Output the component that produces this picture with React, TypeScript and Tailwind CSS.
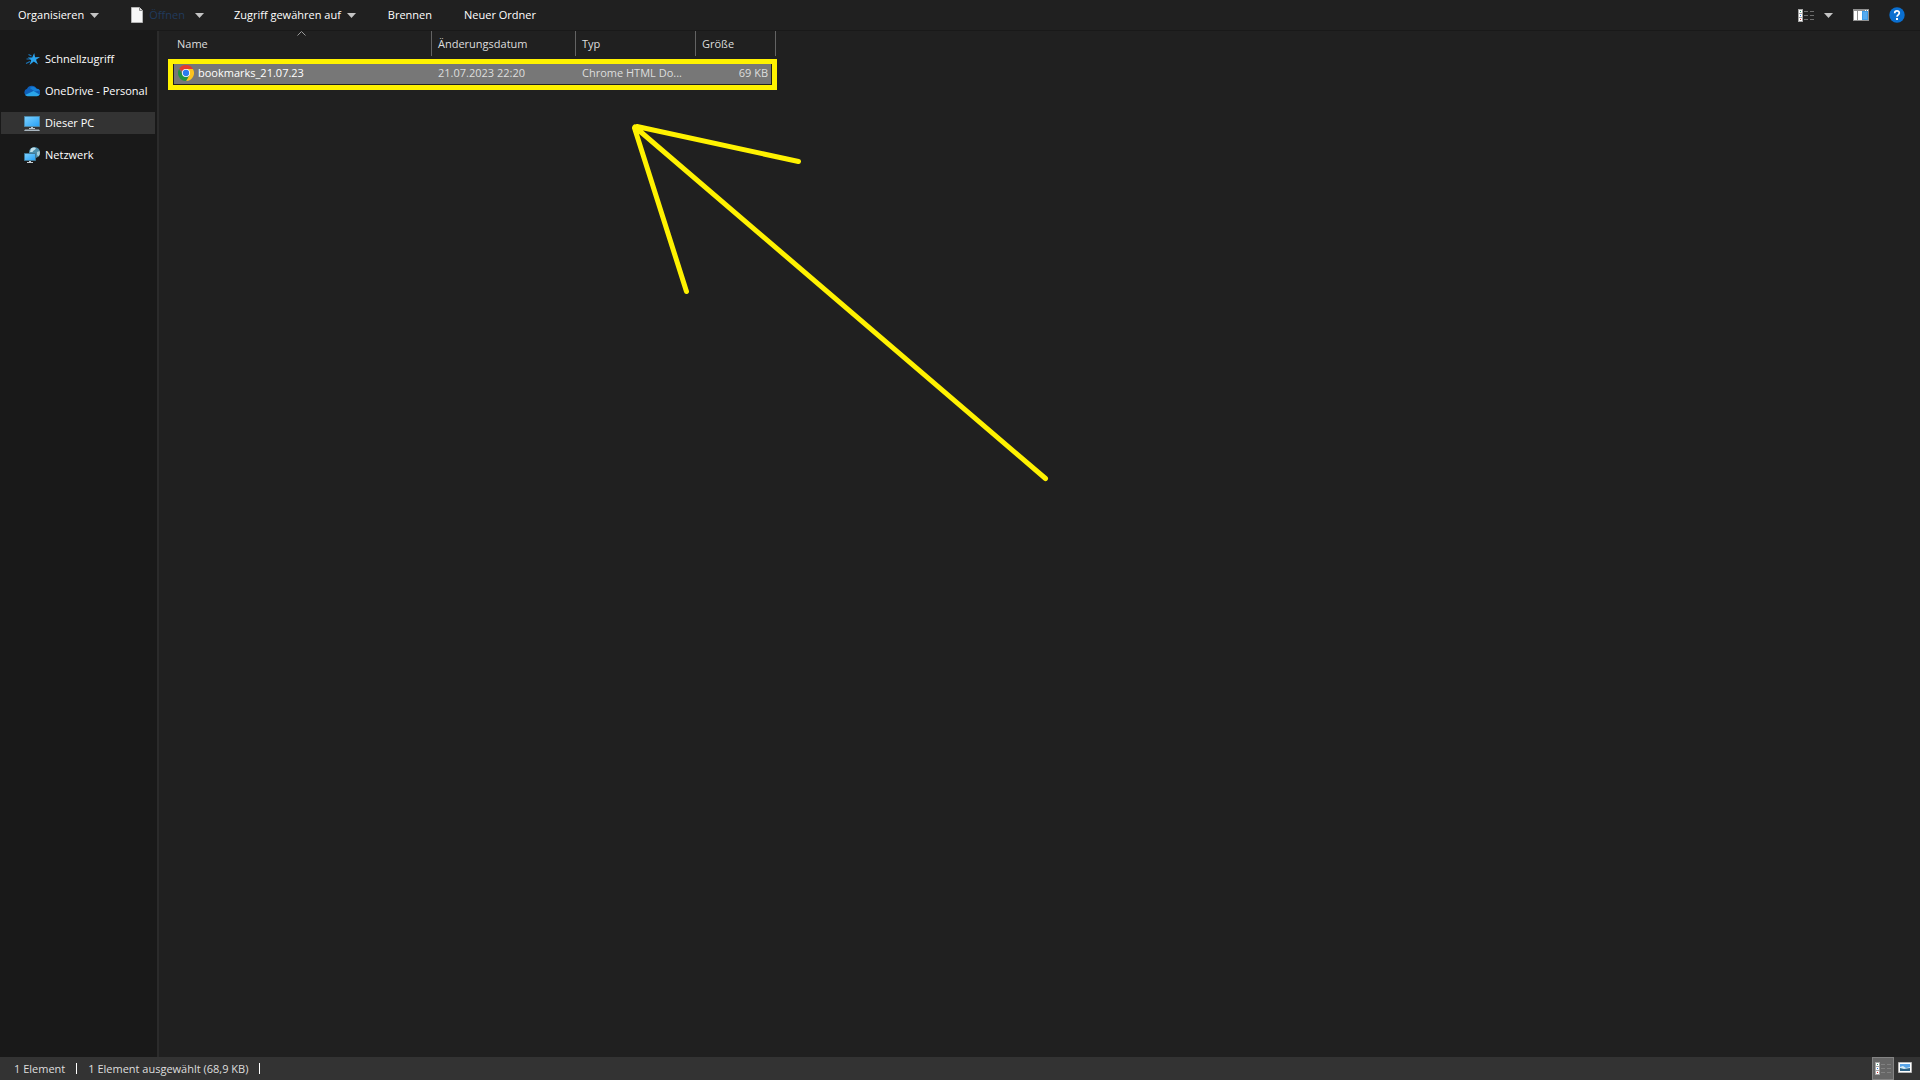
import type { ReactNode } from "react"

const places = [
  { id: 1, name: "Schnellzugriff", icon: <StarIcon /> },
  { id: 2, name: "OneDrive - Personal", icon: <CloudIcon /> },
  { id: 3, name: "Dieser PC", icon: <ComputerIcon />, active: true },
  { id: 4, name: "Netzwerk", icon: <NetworkIcon /> },
]

const files = [
  { id: 1, name: "bookmarks_21.07.23", date: "21.07.2023 22:20", type: "Chrome HTML Do...", size: "69 KB" },
]

function Caret() {
  return (
    <svg className="shrink-0" width="9" height="5" viewBox="0 0 9 5" aria-hidden="true">
      <path d="M0 0h9L4.5 5z" fill="#c4c4c4" />
    </svg>
  )
}

function PageIcon() {
  return (
    <svg width="12" height="16" viewBox="0 0 12 16" aria-hidden="true">
      <path d="M.5.5h8l3 3v12H.5z" fill="#f7f7f7" stroke="#b5b5b5" />
      <path d="M8.5.5v3h3" fill="#ddd" stroke="#8a8a8a" />
    </svg>
  )
}

function StarIcon() {
  return (
    <svg width="16" height="16" viewBox="0 0 16 16" aria-hidden="true">
      <path d="M10.2 2l.9 4.2 4.9-.2-4 2.7 2 4.8-4.2-2.9L5.5 14l1.7-4.7L3.8 6.500l4.400-.1z" fill="#2aa3ee" />
      <path d="M4.500 3.500l3 1.500M2.500 8h4M2 12.500l4-2" stroke="#1a75b8" strokeWidth="1.200" />
    </svg>
  )
}

function CloudIcon() {
  return (
    <svg width="16" height="16" viewBox="0 0 16 16" aria-hidden="true">
      <path d="M3.500 13A3.700 3.700 0 0 1 3 5.800 5.300 5.300 0 0 1 12.600 5.800 3.600 3.600 0 0 1 13 13z" fill="#0f5fb8" />
      <path d="M5.800 5l5 3.500 5-1A3.300 3.300 0 0 0 12.600 5.800 5 5 0 0 0 5.800 5z" fill="#1580d8" />
      <path d="M1 12L9.500 8l6 3.500A3 3 0 0 1 13 13.200H3.500A3.500 3.500 0 0 1 1 12z" fill="#2aa6ea" />
    </svg>
  )
}

function ComputerIcon() {
  return (
    <svg width="16" height="16" viewBox="0 0 16 16" aria-hidden="true">
      <defs>
        <linearGradient id="screen" x1="0" y1="0" x2="1" y2="1">
          <stop offset="0" stopColor="#7ed1ff" />
          <stop offset="1" stopColor="#25a0f5" />
        </linearGradient>
      </defs>
      <path d="M.5 1.500h15v10H.5z" fill="url(#screen)" stroke="#4d88a8" />
      <path d="M7 12h2v1H7zM5 13h6v1H5z" fill="#b9c4cc" />
      <path d="M1 14.500h14l1 1.500H0z" fill="#a9b6c0" />
    </svg>
  )
}

function NetworkIcon() {
  return (
    <svg width="16" height="16" viewBox="0 0 16 16" aria-hidden="true">
      <circle cx="10.500" cy="5.500" r="5.500" fill="#4c8eac" />
      <path d="M7 1.500c2-1.500 4-1.200 5 0-1 2-3 1.500-3.500 3.500L6 5z" fill="#c2e1ea" />
      <path d="M13 5l2.500-1c.8 2 .3 4-1 5.500L13 8z" fill="#a3ccd9" />
      <path d="M.5 6.500h11v7H.5z" fill="url(#screen)" stroke="#3f7896" />
      <path d="M5 14h2v1H5zM3 15h6v1H3z" fill="#c5d0d6" />
    </svg>
  )
}

function ChromeIcon() {
  return (
    <svg className="shrink-0" width="16" height="16" viewBox="0 0 48 48" aria-hidden="true">
      <path d="M24 24L3.200 12A24 24 0 0 1 44.800 12z" fill="#e33b2e" />
      <path d="M24 12h20.800A24 24 0 0 1 24 48l10.400-18z" fill="#fcc31e" />
      <path d="M13.600 30L3.200 12A24 24 0 0 0 24 48l10.400-18z" fill="#229342" />
      <circle cx="24" cy="24" r="12" fill="#fff" />
      <circle cx="24" cy="24" r="9.500" fill="#2b7bf0" />
    </svg>
  )
}

function DetailsIcon({ line }: { line: string }) {
  return (
    <svg width="16" height="13" viewBox="0 0 16 13" aria-hidden="true">
      <path d="M0 0h5v13H0z" fill="#a5a5a5" />
      <path d="M1 1h3v3H1zM1 5h3v3H1zM1 9h3v3H1z" fill="#fff" />
      <path d="M2 2h1v1H2z" fill="#2f8f6b" />
      <path d="M2 6h1v1H2z" fill="#2a75e0" />
      <path d="M2 10h1v1H2z" fill="#d02828" />
      <path d="M6 2h4v1H6zM12 2h4v1h-4zM6 6h4v1H6zM12 6h4v1h-4zM6 10h4v1H6zM12 10h4v1h-4z" fill={line} />
    </svg>
  )
}

function PaneIcon() {
  return (
    <svg width="16" height="12" viewBox="0 0 16 12" aria-hidden="true">
      <path d="M0 0h16v12H0z" fill="#919191" />
      <path d="M12 1h1v1h-1zM14 1h1v1h-1z" fill="#fff" />
      <path d="M1 2h3v9H1zM5 2h4v9H5z" fill="#fff" />
      <path d="M9 2h6v9H9z" fill="#3d9be6" />
      <path d="M10 3h4v7h-4z" fill="#55aaf0" />
    </svg>
  )
}

function HelpIcon() {
  return (
    <svg width="16" height="16" viewBox="0 0 16 16" aria-hidden="true">
      <circle cx="8" cy="8" r="7.700" fill="#0a6fd0" />
      <path d="M5.700 6.200C5.700 3.200 10.300 3.200 10.300 6 10.300 7.800 8 7.800 8 9.800" fill="none" stroke="#fff" strokeWidth="1.700" />
      <path d="M7 11h2v2H7z" fill="#fff" />
    </svg>
  )
}

function ThumbnailIcon() {
  return (
    <svg width="14" height="11" viewBox="0 0 14 11" aria-hidden="true">
      <path d="M.5.5h13v10H.5z" fill="#fff" stroke="#b8b8b8" />
      <path d="M2 2h10v7H2z" fill="#5aa5e8" />
      <path d="M2 5l3-1 3 2 4-1v2H2z" fill="#d8ecf5" />
      <path d="M2 6l4 1 6-1v3H2z" fill="#2d6285" />
    </svg>
  )
}

function ToolButton({ children, label }: { children: ReactNode; label?: string }) {
  return (
    <button type="button" aria-label={label} className="flex h-full items-center gap-1.5 whitespace-nowrap">
      {children}
    </button>
  )
}

function App() {
  return (
    <div className="relative flex min-h-screen flex-col overflow-hidden bg-[#202020] font-['Open_Sans','Noto_Sans',sans-serif] text-[11px] leading-4 text-white">
      {/* TOOLBAR */}
      <header className="flex h-[31px] items-center justify-between border-b border-[#191919] pr-[15px] pl-[18px]">
        <div className="flex h-full items-center">
          <ToolButton>Organisieren <Caret /></ToolButton>
          <div className="ml-8 flex h-full items-center gap-2.5">
            <button type="button" disabled className="flex items-center gap-1.5 text-[#203a5c]">
              <PageIcon /> Öffnen
            </button>
            <ToolButton label="Weitere Optionen"><Caret /></ToolButton>
          </div>
          <div className="ml-[30px] flex h-full items-center gap-8">
            <ToolButton>Zugriff gewähren auf <Caret /></ToolButton>
            <ToolButton>Brennen</ToolButton>
            <ToolButton>Neuer Ordner</ToolButton>
          </div>
        </div>
        <div className="flex h-full items-center gap-5">
          <div className="flex h-full items-center gap-2.5">
            <ToolButton label="Ansicht ändern"><DetailsIcon line="#6e6e6e" /></ToolButton>
            <ToolButton label="Weitere Ansichten"><Caret /></ToolButton>
          </div>
          <ToolButton label="Vorschaufenster"><PaneIcon /></ToolButton>
          <ToolButton label="Hilfe"><HelpIcon /></ToolButton>
        </div>
      </header>

      <div className="flex grow">
        {/* SIDEBAR */}
        <nav className="flex w-[159px] shrink-0 flex-col gap-2.5 border-r-2 border-[#2b2b2b] bg-[#191919] pt-[17px] pr-0.5 pl-px">
          {places.map(place => (
            <a
              key={place.id}
              href="#"
              className={`flex h-[22px] items-center gap-[5px] pl-[23px] whitespace-nowrap ${place.active ? "bg-[#333333]" : ""}`}
            >
              <span className="shrink-0">{place.icon}</span>
              {place.name}
            </a>
          ))}
        </nav>

        {/* FILE LIST */}
        <main className="grow pl-[9px]">
          <div className="relative w-[608px]">
            <table className="w-full table-fixed border-collapse text-left">
              <thead className="text-[#dedede]">
                <tr>
                  <th className="w-[264px] p-0 pb-1.5 font-normal">
                    <div className="relative flex h-[25px] items-center border-r border-[#636363] pl-[9px]">
                      Name
                      <svg className="absolute top-0 left-[129px]" width="9" height="5" viewBox="0 0 9 5" aria-hidden="true">
                        <path d="M.5 4.500l4-4 4 4" fill="none" stroke="#9a9a9a" />
                      </svg>
                    </div>
                  </th>
                  <th className="w-[144px] p-0 pb-1.5 font-normal">
                    <div className="flex h-[25px] items-center border-r border-[#636363] pl-1.5">Änderungsdatum</div>
                  </th>
                  <th className="w-[120px] p-0 pb-1.5 font-normal">
                    <div className="flex h-[25px] items-center border-r border-[#636363] pl-1.5">Typ</div>
                  </th>
                  <th className="w-20 p-0 pb-1.5 font-normal">
                    <div className="flex h-[25px] items-center border-r border-[#636363] pl-1.5">Größe</div>
                  </th>
                </tr>
              </thead>
              <tbody>
                {files.map(file => (
                  <tr key={file.id} className="h-[22px] bg-[#777777] whitespace-nowrap text-[#dedede]">
                    <td className="p-0 pl-2.5 text-white">
                      <div className="flex items-center gap-1"><ChromeIcon /> {file.name}</div>
                    </td>
                    <td className="p-0 pl-1.5">{file.date}</td>
                    <td className="p-0 pl-1.5">{file.type}</td>
                    <td className="p-0 pr-2 text-right">{file.size}</td>
                  </tr>
                ))}
              </tbody>
            </table>

            {/* highlight frame around the selected file */}
            <div className="pointer-events-none absolute top-7 left-0 h-[31px] w-[609px] border-5 border-[#fff200]">
              <div className="h-full border-x border-b border-[#202020]" />
            </div>
          </div>
        </main>
      </div>

      {/* STATUS BAR */}
      <footer className="flex h-[23px] items-center justify-between bg-[#333333] pl-3.5 text-[#dedede]">
        <div className="flex items-center gap-[11px]">
          <span>1 Element</span>
          <span className="h-[11px] w-px bg-white" />
          <span>1 Element ausgewählt (68,9 KB)</span>
          <span className="h-[11px] w-px bg-white" />
        </div>
        <div className="flex h-full">
          <button type="button" aria-label="Details" className="flex h-full w-[22px] items-center justify-center border border-[#838383] bg-[#666666]">
            <DetailsIcon line="#808080" />
          </button>
          <button type="button" aria-label="Große Symbole" className="flex h-full w-[26px] items-center pb-0.5 pl-1">
            <ThumbnailIcon />
          </button>
        </div>
      </footer>

      {/* arrow pointing at the selected file */}
      <svg className="pointer-events-none absolute top-[120px] left-[630px]" width="422" height="366" viewBox="630 120 422 366" aria-hidden="true">
        <path d="M798.500 161.500L637 126.500M686.500 291.500L634.500 128M1045.500 478.500L635 127" fill="none" stroke="#fff200" strokeWidth="5" strokeLinecap="round" />
      </svg>
    </div>
  )
}

export default App
